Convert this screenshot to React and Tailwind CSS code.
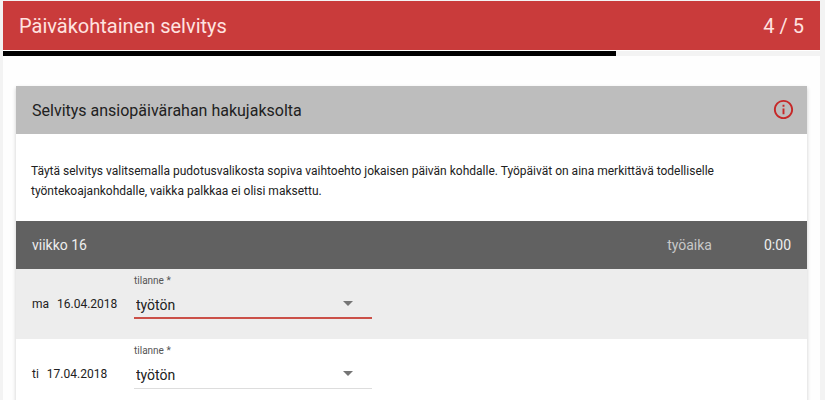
import React, { useState } from 'react';
import { MdInfoOutline } from 'react-icons/md';

const STEP = 4;
const STEP_COUNT = 5;

const OPTIONS = ['työtön', 'työssä', 'sairaana', 'lomalla'];

const DAYS = [
  { id: 'ma', date: '16.04.2018', active: true },
  { id: 'ti', date: '17.04.2018', active: false },
];

function DayRow({ day }) {
  const [status, setStatus] = useState(OPTIONS[0]);

  return (
    <li className="flex h-[70px] px-4 odd:bg-[#ededed]">
      <div className="w-[102px] shrink-0 pt-[25px] text-[12px] leading-5">
        <span className="mr-2">{day.id}</span>
        <time>{day.date}</time>
      </div>
      <div className="flex w-[238px] flex-col pt-1">
        <label htmlFor={`tilanne-${day.id}`} className="text-[10px] leading-4 text-[#555555]">
          tilanne *
        </label>
        <div
          className={
            day.active
              ? 'flex h-[30px] items-center border-b-2 border-[#cb5048] pt-1'
              : 'flex h-[30px] items-center border-b border-[#dddddd] pt-1 pb-px'
          }
        >
          <select
            id={`tilanne-${day.id}`}
            value={status}
            onChange={(e) => setStatus(e.target.value)}
            className="-mr-7 w-full appearance-none bg-transparent pl-[2px] text-[14px] leading-5 outline-none"
          >
            {OPTIONS.map((option) => (
              <option key={option}>{option}</option>
            ))}
          </select>
          <svg className="pointer-events-none mr-[19px] mb-1 h-[5px] w-[10px] shrink-0 fill-[#757575]" viewBox="0 0 10 5">
            <path d="M0 0h10L5 5z" />
          </svg>
        </div>
      </div>
    </li>
  );
}

export default function App() {
  return (
    <div className="h-screen overflow-hidden bg-[#f3f3f3] pt-px pr-[5px] pl-[3px] font-[Roboto,sans-serif] text-[#212121]">
      <div className="min-h-screen bg-[#fefefe]">
        <header className="flex h-[49px] items-center justify-between bg-[#c93b3b] px-4 text-[20px] text-[#ffe3e0]">
          <h1>Päiväkohtainen selvitys</h1>
          <span>
            {STEP} / {STEP_COUNT}
          </span>
        </header>

        {/* Progress */}
        <div className="border-t border-white bg-[#f3f3f3]">
          <div className="h-[5px] w-3/4 bg-black" />
        </div>

        <main className="mx-[13px] mt-[30px] bg-white shadow-[0_2px_4px_rgba(0,0,0,0.2)]">
          <div className="flex h-12 items-center justify-between bg-[#bdbdbd] pr-3 pl-4">
            <h2 className="pt-px text-[16px]">Selvitys ansiopäivärahan hakujaksolta</h2>
            <button type="button" aria-label="Lisätietoja" className="pb-[2px] text-[#c62828]">
              <MdInfoOutline size={23} />
            </button>
          </div>

          <p className="px-[15px] pt-[27px] pb-5 text-[12px] leading-5">
            Täytä selvitys valitsemalla pudotusvalikosta sopiva vaihtoehto jokaisen päivän kohdalle. Työpäivät on aina
            merkittävä todelliselle työntekoajankohdalle, vaikka palkkaa ei olisi maksettu.
          </p>

          <section>
            <div className="flex h-12 items-center bg-[#616161] px-4 text-[14px] text-[#eeeeee]">
              <h3>viikko 16</h3>
              <span className="mr-[52px] ml-auto text-[#c8c8c8]">työaika</span>
              <span>0:00</span>
            </div>
            <ul>
              {DAYS.map((day) => (
                <DayRow key={day.id} day={day} />
              ))}
            </ul>
          </section>
        </main>
      </div>
    </div>
  );
}
